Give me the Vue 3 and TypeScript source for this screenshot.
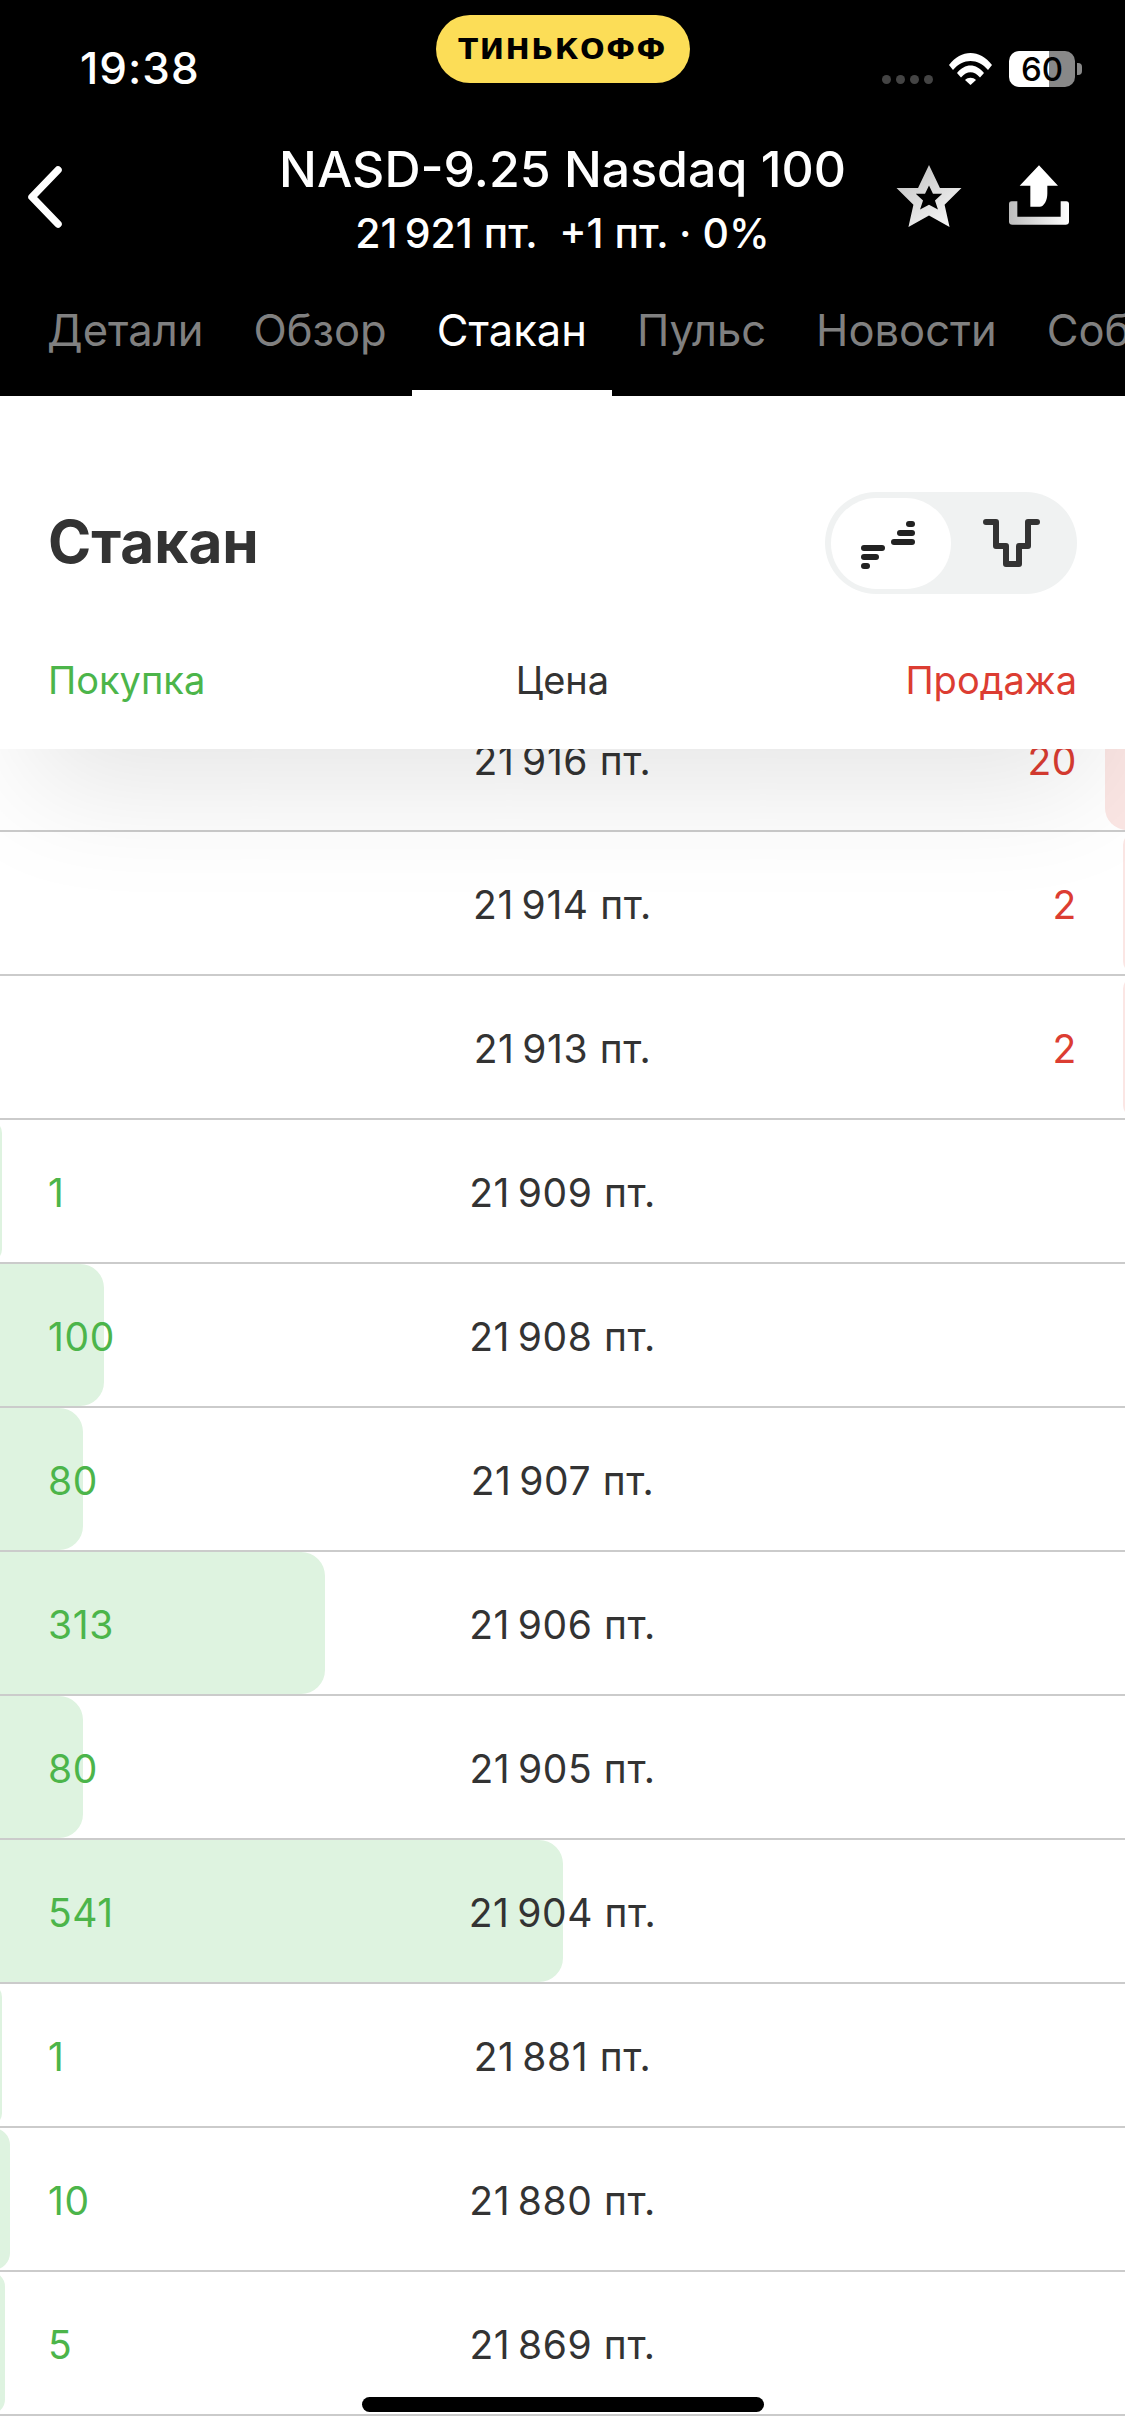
<template>
  <div class="screen">
    <!-- Black top area -->
    <div class="top">
      <div class="status-bar">
        <span class="time">19:38</span>
        <div class="brand"><span class="brand-text">ТИНЬКОФФ</span></div>
        <div class="status-icons">
          <div class="signal">
            <span v-for="n in 4" :key="n" class="signal-dot"></span>
          </div>
          <svg class="wifi" width="45" height="33" viewBox="0 0 45 33">
            <path d="M1 13 C13 -3 32 -3 44 13 L40 18 C30 6 15 6 5 18 Z" fill="#fff"/>
            <path d="M9 21 C17 11 28 11 36 21 L32 25.5 C26 18.5 19 18.5 13 25.5 Z" fill="#fff"/>
            <path d="M17 28 C20 25 25 25 28 28 L22.5 33 Z" fill="#fff"/>
          </svg>
          <div class="battery">
            <span class="battery-num">60</span>
          </div>
          <span class="battery-nub"></span>
        </div>
      </div>

      <div class="nav">
        <svg class="back" width="40" height="66" viewBox="0 0 40 66" fill="none">
          <path d="M33 6 L7 33 L33 60" stroke="#fff" stroke-width="7.5" stroke-linecap="round" stroke-linejoin="round"/>
        </svg>
        <div class="nav-title">
          <div class="title">NASD-9.25 Nasdaq 100</div>
          <div class="subtitle">21&#8201;921 пт. &nbsp;+1 пт. · 0%</div>
        </div>
        <div class="nav-actions">
          <svg width="66" height="62" viewBox="0 0 196 187">
            <defs>
              <linearGradient id="starFill" x1="0" y1="0" x2="0.7" y2="1">
                <stop offset="0" stop-color="#bdbdbd"/>
                <stop offset="1" stop-color="#f5f5f5"/>
              </linearGradient>
              <linearGradient id="trayFill" x1="0" y1="0" x2="1" y2="0">
                <stop offset="0" stop-color="#bdbdbd"/>
                <stop offset="1" stop-color="#ffffff"/>
              </linearGradient>
            </defs>
            <path fill="url(#starFill)" fill-rule="evenodd" d="M98 0 L131 69 L196 69 L145 120 L160 187 L98 152 L36 187 L51 120 L0 69 L65 69 Z M98 62 L86 87 L58 87 L80 107 L71 134 L98 120 L125 134 L116 107 L138 87 L110 87 Z"/>
          </svg>
          <svg width="60" height="60" viewBox="0 0 180 179">
            <path fill="#fff" d="M90 0 L147 62 L115 62 L115 85 C115 105 105 125 92 125 L64 125 L64 62 L32 62 Z"/>
            <path fill="url(#trayFill)" d="M0 116 C0 110 4 108 8 108 L25 108 L25 155 L155 155 L155 108 L172 108 C176 108 180 110 180 116 L180 170 C180 175 176 179 170 179 L10 179 C4 179 0 175 0 170 Z"/>
          </svg>
        </div>
      </div>

      <div class="tabs">
        <div v-for="tab in tabs" :key="tab" class="tab" :class="{ 'tab-active': tab === 'Стакан' }">{{ tab }}</div>
      </div>
    </div>

    <!-- White sticky header -->
    <div class="book-header">
      <div class="book-title-row">
        <h1 class="book-title">Стакан</h1>
        <div class="switch">
          <div class="switch-item switch-item-on">
            <svg class="icon-steps" width="54" height="48" viewBox="0 0 54 48" fill="none" stroke="#222" stroke-width="6" stroke-linecap="round">
              <path d="M3 27 H21"/>
              <path d="M3 36 H15"/>
              <path d="M3 45 H6"/>
              <path d="M33 21 H51"/>
              <path d="M39 12 H51"/>
              <path d="M48 3 H51"/>
            </svg>
          </div>
          <div class="switch-item">
            <svg width="57" height="48" viewBox="0 0 57 48" fill="none" stroke="#333" stroke-width="6" stroke-linecap="round" stroke-linejoin="round">
              <path d="M3 3 H13 V27 H23 V45 H36 V27 H45 V3 H54"/>
            </svg>
          </div>
        </div>
      </div>
      <div class="col-labels">
        <span class="label-buy">Покупка</span>
        <span class="label-price">Цена</span>
        <span class="label-sell">Продажа</span>
      </div>
    </div>

    <!-- Order book rows -->
    <div class="rows">
      <div v-for="row in rows" :key="row.price" class="row">
        <span v-if="row.side === 'buy'" class="bar bar-buy" :style="{ width: row.bar + 24 + 'px' }"></span>
        <span v-else class="bar bar-sell" :style="{ width: row.bar + 24 + 'px' }"></span>
        <span class="qty qty-buy">{{ row.side === 'buy' ? row.qty : '' }}</span>
        <span class="price">{{ row.price }} пт.</span>
        <span class="qty qty-sell">{{ row.side === 'sell' ? row.qty : '' }}</span>
      </div>
    </div>

    <div class="home-indicator"></div>
  </div>
</template>

<script setup lang="ts">
interface BookRow {
  price: string
  qty: number
  side: 'buy' | 'sell'
  bar: number
}

const tabs = ['Детали', 'Обзор', 'Стакан', 'Пульс', 'Новости', 'События']

const rows: BookRow[] = [
  { price: '21\u2009916', qty: 20, side: 'sell', bar: 20 },
  { price: '21\u2009914', qty: 2, side: 'sell', bar: 2 },
  { price: '21\u2009913', qty: 2, side: 'sell', bar: 2 },
  { price: '21\u2009909', qty: 1, side: 'buy', bar: 2 },
  { price: '21\u2009908', qty: 100, side: 'buy', bar: 104 },
  { price: '21\u2009907', qty: 80, side: 'buy', bar: 83 },
  { price: '21\u2009906', qty: 313, side: 'buy', bar: 325 },
  { price: '21\u2009905', qty: 80, side: 'buy', bar: 83 },
  { price: '21\u2009904', qty: 541, side: 'buy', bar: 563 },
  { price: '21\u2009881', qty: 1, side: 'buy', bar: 2 },
  { price: '21\u2009880', qty: 10, side: 'buy', bar: 10 },
  { price: '21\u2009869', qty: 5, side: 'buy', bar: 5 },
]
</script>

<style scoped>
.screen {
  position: relative;
  width: 1125px;
  height: 2436px;
  overflow: hidden;
  background: #fff;
  font-family: Inter, 'Liberation Sans', sans-serif;
  color: #333;
}

/* ─── Top ─── */
.top {
  position: relative;
  z-index: 3;
  height: 396px;
  background: #000;
  color: #fff;
}

.status-bar {
  display: grid;
  grid-template-columns: 1fr 254px 1fr;
  height: 100px;
  padding: 15px 43px 0;
  box-sizing: border-box;
}

.time {
  font-size: 44px;
  font-weight: 500;
  line-height: 50px;
  letter-spacing: 1px;
  margin: 28px 0 0 37px;
}

.brand {
  display: flex;
  align-items: center;
  justify-content: center;
  height: 68px;
  border-radius: 34px;
  background: #fcdd57;
}

.brand-text {
  font-family: 'DejaVu Sans', sans-serif;
  font-size: 29px;
  font-weight: 700;
  letter-spacing: 1.5px;
  color: #000;
  white-space: nowrap;
}

.status-icons {
  display: flex;
  align-items: flex-start;
  justify-content: flex-end;
  padding-top: 36px;
}

.signal {
  display: flex;
  gap: 5px;
  margin-top: 24px;
  margin-right: 15px;
}

.signal-dot {
  width: 9px;
  height: 9px;
  border-radius: 50%;
  background: #444;
}

.wifi {
  margin-top: 1px;
  margin-right: 16px;
}

.battery {
  display: flex;
  align-items: center;
  justify-content: center;
  width: 66px;
  height: 36px;
  border-radius: 10px;
  background: linear-gradient(90deg, #fff 0, #fff 40px, #888 40px, #888 100%);
}

.battery-num {
  font-size: 33px;
  font-weight: 500;
  color: #000;
}

.battery-nub {
  width: 5px;
  height: 12px;
  margin: 12px 0 0 2px;
  border-radius: 0 4px 4px 0;
  background: #888;
}

.nav {
  display: grid;
  grid-template-columns: 165px 1fr 165px;
  height: 170px;
}

.back {
  margin: 64px 0 0 25px;
}

.nav-title {
  text-align: center;
  padding-top: 45px;
}

.title {
  font-size: 50px;
  font-weight: 500;
  line-height: 48px;
  white-space: nowrap;
}

.subtitle {
  font-size: 41px;
  font-weight: 500;
  line-height: 44px;
  margin-top: 18px;
  white-space: nowrap;
}

.nav-actions {
  display: flex;
  align-items: flex-start;
  gap: 47px;
  padding-top: 65px;
  margin-left: -64px;
}

.tabs {
  display: flex;
  height: 126px;
  padding-left: 22px;
  overflow: hidden;
}

.tab {
  flex-shrink: 0;
  box-sizing: border-box;
  padding: 35px 25px 0;
  font-size: 43.5px;
  line-height: 50px;
  color: #808080;
}

.tab-active {
  color: #fff;
  border-bottom: 6px solid #fff;
}

/* ─── Book header ─── */
.book-header {
  position: relative;
  z-index: 2;
  height: 353px;
  background: #fff;
  box-shadow: 0 70px 120px -30px rgba(0, 0, 0, 0.1);
}

.book-title-row {
  display: flex;
  align-items: center;
  justify-content: space-between;
  height: 198px;
  padding: 96px 48px 0;
  box-sizing: border-box;
}

.book-title {
  margin: -3px 0 0;
  font-size: 58.5px;
  font-weight: 700;
  color: #333;
}

.switch {
  display: flex;
  align-items: center;
  width: 252px;
  height: 102px;
  padding: 0 6px;
  box-sizing: border-box;
  border-radius: 51px;
  background: #f0f2f2;
}

.switch-item {
  display: flex;
  align-items: center;
  justify-content: center;
  width: 120px;
  height: 91px;
  border-radius: 46px;
}

.switch-item-on {
  background: #fff;
}

.icon-steps {
  margin-right: 6px;
  margin-top: 3px;
}

.col-labels {
  display: grid;
  grid-template-columns: 1fr auto 1fr;
  padding: 63px 48px 0;
  font-size: 38px;
  line-height: 46px;
}

.label-buy { color: #4cb54a; }
.label-price { color: #333; }
.label-sell { color: #dc3d32; text-align: right; }

/* ─── Rows ─── */
.rows {
  margin-top: -61px;
}

.row {
  position: relative;
  display: grid;
  grid-template-columns: 1fr auto 1fr;
  align-items: center;
  height: 144px;
  box-sizing: border-box;
  padding: 2px 48px 0;
  border-bottom: 2px solid #cbcbcb;
  overflow: hidden;
  font-size: 39px;
  letter-spacing: 0.6px;
}

.bar {
  position: absolute;
  top: 0;
  bottom: 0;
  border-radius: 24px;
}

.bar-buy {
  left: -24px;
  background: #def3e0;
}

.bar-sell {
  right: -24px;
  background: #fbe6e4;
}

.qty,
.price {
  position: relative;
}

.price { color: #333; }
.qty-buy { color: #4cb54a; }
.qty-sell { color: #dc3d32; text-align: right; }

.home-indicator {
  position: absolute;
  left: 362px;
  top: 2397px;
  width: 402px;
  height: 15px;
  border-radius: 8px;
  background: #000;
  z-index: 4;
}
</style>

<style>
html, body {
  margin: 0;
  background: #fff;
}
</style>
